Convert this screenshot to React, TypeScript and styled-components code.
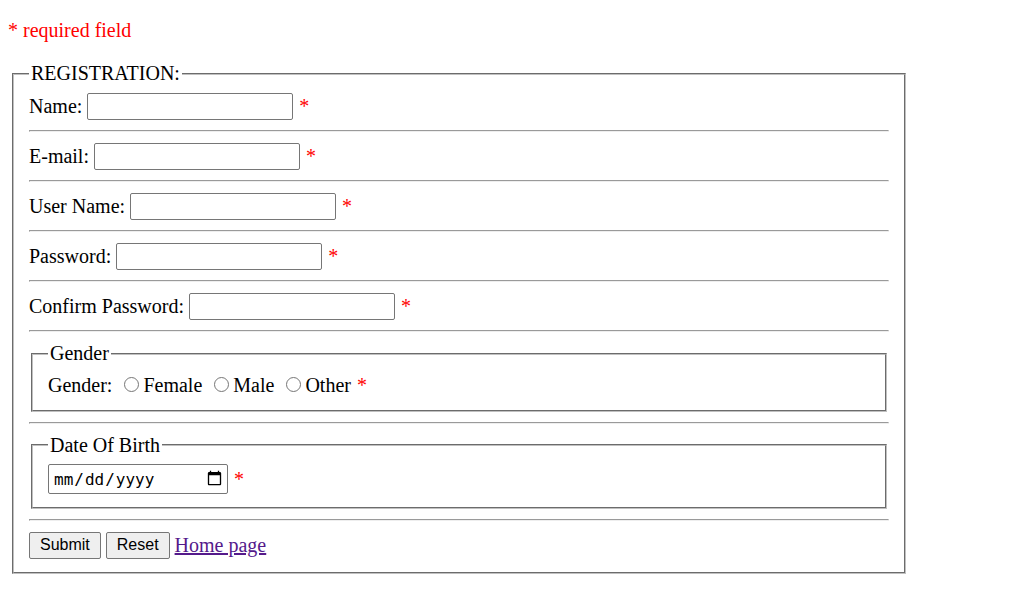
import React from "react";
import styled, { createGlobalStyle } from "styled-components";

const Global = createGlobalStyle`
  body {
    margin: 0;
    padding: 8px;
    font-family: "Liberation Serif", "Times New Roman", serif;
    font-size: 20px;
    color: #000;
    background: #fff;
  }
`;

const Note = styled.p`
  margin: 11px 0 20px;
  color: #ff0000;
`;

const Form = styled.form`
  margin: 0;
`;

const MainSet = styled.fieldset`
  box-sizing: border-box;
  width: 894px;
  margin: 0 4px;
  padding: 7px 15px 12.5px;
  border: 2px groove rgb(192, 192, 192);
`;

const SubSet = styled.fieldset`
  margin: 0 2px;
  padding: 7px 15px 12.5px;
  border: 2px groove rgb(192, 192, 192);
`;

const Legend = styled.legend`
  padding: 0 2px;
`;

const Row = styled.div<{ $h?: number }>`
  display: flex;
  align-items: center;
  gap: 5px;
  height: ${(p) => p.$h ?? 28}px;
`;

const Label = styled.label`
  white-space: nowrap;
`;

const TextInput = styled.input`
  box-sizing: border-box;
  width: 206px;
  height: 27px;
  margin: 0;
  padding: 1px 2px;
  border: 1px solid #767676;
  border-radius: 2px;
  font: 13.333px Arial, sans-serif;
`;

const Star = styled.span`
  color: #ff0000;
  margin-left: 1px;
`;

const Rule = styled.hr`
  margin: 10px 0;
  border: 1px inset;
  color: gray;
`;

const RadioLine = styled.div`
  padding-top: 2px;
  white-space: nowrap;
`;

const Radio = styled.input`
  appearance: none;
  box-sizing: border-box;
  width: 15px;
  height: 15px;
  margin: 3px 4px 0 7px;
  border: 1px solid #767676;
  border-radius: 50%;
  background: #fff;
  vertical-align: baseline;
  &:checked {
    background: radial-gradient(circle, #0075ff 0 4px, #fff 4.5px);
    border-color: #0075ff;
  }
`;

const DateInput = styled.input`
  box-sizing: border-box;
  width: 180px;
  height: 30px;
  margin: 0;
  padding: 1px 4px;
  border: 1px solid #767676;
  border-radius: 2px;
  font: 16px "DejaVu Sans Mono", monospace;
  &::-webkit-calendar-picker-indicator {
    width: 17px;
    height: 19px;
    margin-left: 4px;
    padding: 0;
  }
`;

const Button = styled.button`
  box-sizing: border-box;
  height: 27px;
  margin: 0;
  padding: 0 10px;
  border: 1px solid #767676;
  border-radius: 2px;
  background: #efefef;
  color: #000;
  font: 16px Arial, "Liberation Sans", sans-serif;
`;

const HomeLink = styled.a`
  color: #551a8b;
  text-decoration: underline;
`;

const fields = ["Name", "E-mail", "User Name", "Password", "Confirm Password"];

export default function App() {
  return (
    <>
      <Global />
      <Note>* required field</Note>
      <Form onSubmit={(e) => e.preventDefault()}>
        <MainSet>
          <Legend>REGISTRATION:</Legend>
          {fields.map((f) => (
            <React.Fragment key={f}>
              <Row>
                <Label>{f}:</Label>
                <TextInput type={f.includes("Password") ? "password" : "text"} />
                <Star>*</Star>
              </Row>
              <Rule />
            </React.Fragment>
          ))}
          <SubSet>
            <Legend>Gender</Legend>
            <RadioLine>
              Gender: <Radio type="radio" name="g" />Female <Radio type="radio" name="g" />Male{" "}
              <Radio type="radio" name="g" />Other <Star>*</Star>
            </RadioLine>
          </SubSet>
          <Rule />
          <SubSet>
            <Legend>Date Of Birth</Legend>
            <Row $h={31}>
              <DateInput type="date" />
              <Star>*</Star>
            </Row>
          </SubSet>
          <Rule />
          <Row $h={28}>
            <Button type="submit">Submit</Button>
            <Button type="reset">Reset</Button>
            <HomeLink href="#">Home page</HomeLink>
          </Row>
        </MainSet>
      </Form>
    </>
  );
}
